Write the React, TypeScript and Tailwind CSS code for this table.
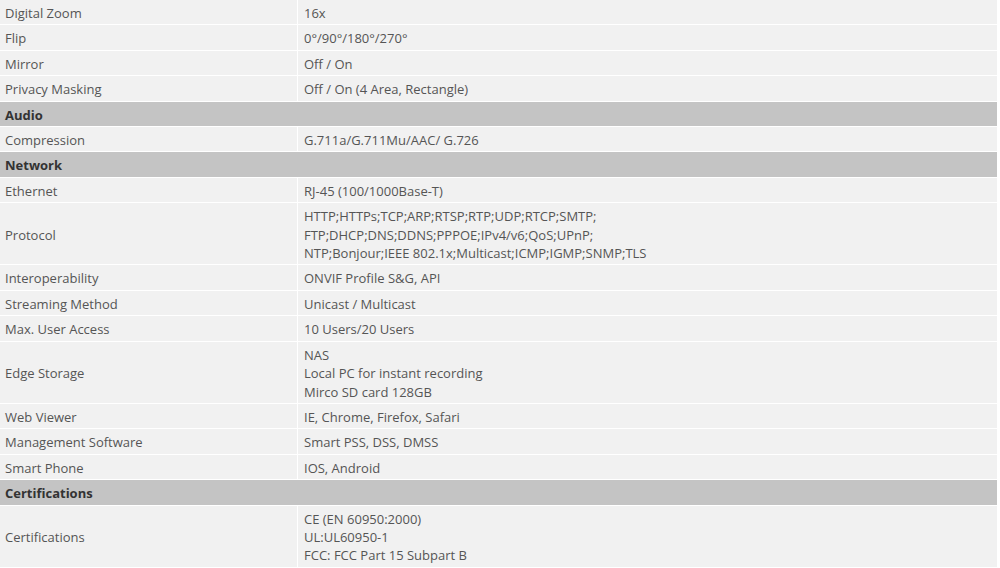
import React from "react";

type Row = { h: string } | { k: string; v: string[] };

const rows: Row[] = [
  { k: "Digital Zoom", v: ["16x"] },
  { k: "Flip", v: ["0°/90°/180°/270°"] },
  { k: "Mirror", v: ["Off / On"] },
  { k: "Privacy Masking", v: ["Off / On (4 Area, Rectangle)"] },
  { h: "Audio" },
  { k: "Compression", v: ["G.711a/G.711Mu/AAC/ G.726"] },
  { h: "Network" },
  { k: "Ethernet", v: ["RJ-45 (100/1000Base-T)"] },
  {
    k: "Protocol",
    v: [
      "HTTP;HTTPs;TCP;ARP;RTSP;RTP;UDP;RTCP;SMTP;",
      "FTP;DHCP;DNS;DDNS;PPPOE;IPv4/v6;QoS;UPnP;",
      "NTP;Bonjour;IEEE 802.1x;Multicast;ICMP;IGMP;SNMP;TLS",
    ],
  },
  { k: "Interoperability", v: ["ONVIF Profile S&G, API"] },
  { k: "Streaming Method", v: ["Unicast / Multicast"] },
  { k: "Max. User Access", v: ["10 Users/20 Users"] },
  { k: "Edge Storage", v: ["NAS", "Local PC for instant recording", "Mirco SD card 128GB"] },
  { k: "Web Viewer", v: ["IE, Chrome, Firefox, Safari"] },
  { k: "Management Software", v: ["Smart PSS, DSS, DMSS"] },
  { k: "Smart Phone", v: ["IOS, Android"] },
  { h: "Certifications" },
  { k: "Certifications", v: ["CE (EN 60950:2000)", "UL:UL60950-1", "FCC: FCC Part 15 Subpart B"] },
];

export default function App() {
  return (
    <div className="w-[1000px] h-[568px] overflow-hidden bg-white">
      <div
        className="w-[997px] grid grid-cols-[297px_1fr] gap-px bg-white text-[13px] leading-[18.4px] text-[#555555]"
        style={{ fontFamily: '"Open Sans", "Noto Sans", sans-serif' }}
      >
        {rows.map((r, i) =>
          "h" in r ? (
            <div
              key={i}
              className="col-span-2 bg-[#c4c4c4] px-[5px] pt-[4px] pb-[2px] font-bold text-[#333333]"
            >
              {r.h}
            </div>
          ) : (
            <React.Fragment key={i}>
              <div className="bg-[#f1f1f1] px-[5px] pt-[4px] pb-[2px] flex items-center">{r.k}</div>
              <div className="bg-[#f1f1f1] px-[6px] pt-[4px] pb-[2px]">
                {r.v.map((line, j) => (
                  <div key={j}>{line}</div>
                ))}
              </div>
            </React.Fragment>
          )
        )}
      </div>
    </div>
  );
}
